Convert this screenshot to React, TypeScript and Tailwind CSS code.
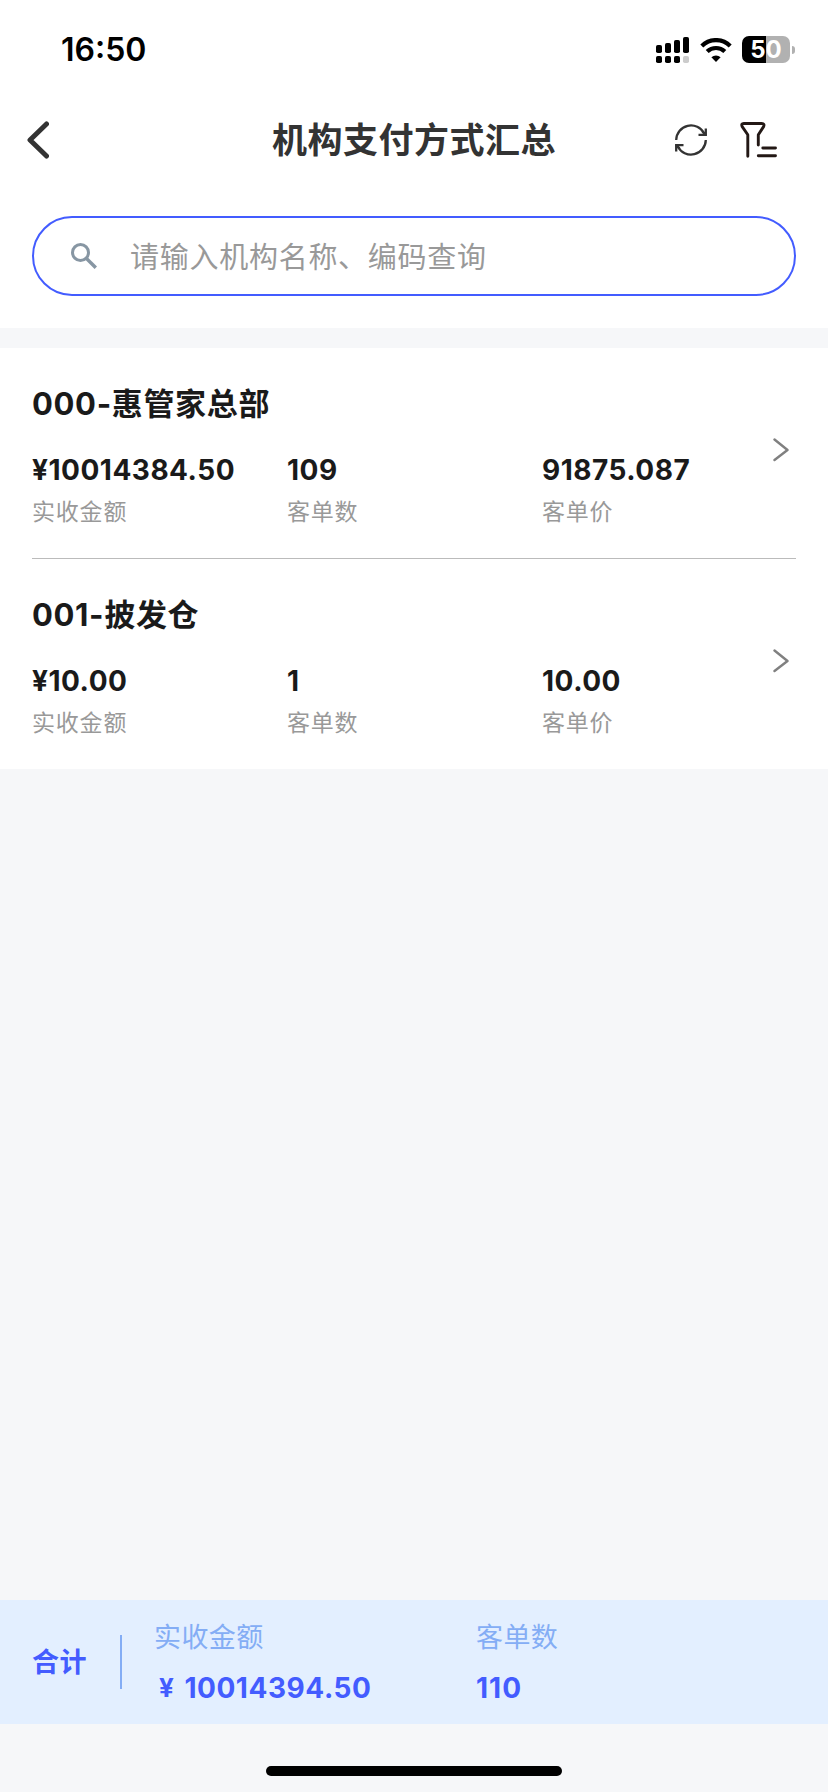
type Branch = {
  name: string
  amount: string
  orders: string
  average: string
}

const branches: Branch[] = [
  { name: "000-惠管家总部", amount: "¥10014384.50", orders: "109", average: "91875.087" },
  { name: "001-披发仓", amount: "¥10.00", orders: "1", average: "10.00" },
]

function SignalIcon() {
  return (
    <svg className="w-[33px] h-[27px]" viewBox="0 0 33 27">
      <rect x="0" y="9" width="6" height="8" rx="1.8" />
      <rect x="9" y="7" width="6" height="10" rx="1.8" />
      <rect x="18" y="4" width="6" height="13" rx="1.8" />
      <rect x="27" y="1" width="6" height="16" rx="1.8" />
      <rect x="0" y="20" width="6" height="7" rx="1.8" />
      <rect x="9" y="20" width="6" height="7" rx="1.8" />
      <rect x="18" y="20" width="6" height="7" rx="1.8" />
      <rect x="27" y="20" width="6" height="7" rx="1.8" fill="#cccccc" />
    </svg>
  )
}

function WifiIcon() {
  return (
    <svg className="w-8 h-6 ml-[11px]" viewBox="0 0 32 24">
      <path d="M1.8 7.9a20.2 20.2 0 0 1 28.4 0" fill="none" stroke="#000" strokeWidth="4.2" />
      <path d="M7.2 13.6a12.6 12.6 0 0 1 17.6 0" fill="none" stroke="#000" strokeWidth="4.2" />
      <path d="M16 24l-4.6-4.7a6.6 6.6 0 0 1 9.2 0z" />
    </svg>
  )
}

function Battery() {
  return (
    <div className="flex items-center ml-[10px]">
      <div className="w-12 h-[27px] rounded-[7px] bg-[linear-gradient(90deg,#000_50%,#b1b1b1_50%)] flex items-center justify-center text-white text-[24px] leading-none font-bold">
        50
      </div>
      <div className="ml-[2px] w-[3px] h-[8px] rounded-r-full bg-[#b1b1b1]" />
    </div>
  )
}

function StatusBar() {
  return (
    <div className="h-[99px] pl-[61px] pr-[33px] flex items-center justify-between">
      <span className="text-[32px] leading-none font-semibold text-black">16:50</span>
      <div className="flex items-center">
        <SignalIcon />
        <WifiIcon />
        <Battery />
      </div>
    </div>
  )
}

function NavBar() {
  return (
    <div className="h-[82px] pl-[27px] pr-[51px] grid grid-cols-[1fr_auto_1fr] items-center">
      <svg className="w-[22px] h-[38px]" viewBox="0 0 22 38" fill="none">
        <path d="M19.5 3L3 19l16.5 16" stroke="#333" strokeWidth="5" strokeLinecap="round" strokeLinejoin="round" />
      </svg>
      <h1 className="pl-6 text-[35px] leading-none font-bold tracking-[0.5px] text-[#333]">机构支付方式汇总</h1>
      <div className="flex items-center justify-end">
        <svg className="w-8 h-8 mr-[33px]" viewBox="0 0 32 32" fill="none" stroke="#333" strokeWidth="2.3">
          <path d="M1.2 16a14.800 14.800 0 0 1 28-6.500" />
          <path d="M30.800 4.500v6.300h-7.300" />
          <path d="M30.800 16a14.800 14.800 0 0 1-28 6.500" />
          <path d="M1.200 27.500v-6.300h7.300" />
          <path d="M31 11l-3.500-3.500M1 21l3.500 3.500" />
        </svg>
        <svg
          className="w-[37px] h-9"
          viewBox="0 0 37 36"
          fill="none"
          stroke="#231815"
          strokeWidth="2.9"
          strokeLinecap="round"
          strokeLinejoin="round"
        >
          <path d="M7.8 34.200V12.800L2.200 4.600Q0.800 1.500 3.800 1.500H21.500Q25 1.500 23.600 4.600L18.300 12.800V23" />
          <path d="M22.800 26h12.700M18.300 33.800h17.200" />
        </svg>
      </div>
    </div>
  )
}

function SearchBar() {
  return (
    <div className="px-8 pt-[35px] pb-8">
      <div className="h-20 rounded-full border-2 border-[#435cff] flex items-center">
        <svg className="w-[26px] h-[26px] ml-[37px]" viewBox="0 0 26 26" fill="none" stroke="#8796a3">
          <circle cx="9.5" cy="9.5" r="8" strokeWidth="3" />
          <path d="M15.5 15.5l9.3 9.3" strokeWidth="3.4" />
        </svg>
        <span className="pt-[2px] ml-[33px] text-[29px] leading-none tracking-[0.73px] text-[#999]">
          请输入机构名称、编码查询
        </span>
      </div>
    </div>
  )
}

function Metric({ value, label }: { value: string; label: string }) {
  return (
    <div>
      <div className="text-[28px] leading-[34px] font-bold tracking-[0.5px] text-[#1a1a1a]">{value}</div>
      <div className="mt-2 text-[23px] leading-[34px] tracking-[0.8px] text-[#999]">{label}</div>
    </div>
  )
}

function BranchRow({ branch }: { branch: Branch }) {
  return (
    <div className="flex items-start pb-5">
      <div className="flex-1 pt-9">
        <h2 className="text-[31px] leading-10 font-bold tracking-[0.65px] text-[#1a1a1a]">{branch.name}</h2>
        <div className="mt-[29px] h-[85px] grid grid-cols-[255px_255px_1fr]">
          <Metric value={branch.amount} label="实收金额" />
          <Metric value={branch.orders} label="客单数" />
          <Metric value={branch.average} label="客单价" />
        </div>
      </div>
      <svg className="w-4 h-6 mt-[90px] mr-[7px]" viewBox="0 0 16 24" fill="none">
        <path d="M1.5 1.5L14.5 12L1.5 22" stroke="#808080" strokeWidth="2.4" strokeLinecap="round" strokeLinejoin="round" />
      </svg>
    </div>
  )
}

function TotalBar() {
  return (
    <div className="h-[124px] bg-[#e3efff] text-[#435cff] flex items-center pl-8">
      <span className="w-[88px] text-[27px] leading-none font-bold tracking-[0.4px]">合计</span>
      <div className="w-[2px] h-[54px] bg-[#84adf5]" />
      <div className="ml-8 pt-px grid grid-cols-[322px_1fr]">
        <div>
          <div className="text-[27px] leading-9 tracking-[0.4px] text-[#84adf5]">实收金额</div>
          <div className="mt-[14px] pl-[5px] flex items-center gap-[10px] text-[28px] leading-9 font-bold tracking-[0.55px]">
            <span className="text-[26px]">¥</span>
            <span>10014394.50</span>
          </div>
        </div>
        <div>
          <div className="text-[27px] leading-9 tracking-[0.4px] text-[#84adf5]">客单数</div>
          <div className="mt-[14px] text-[28px] leading-9 font-bold tracking-[1px]">110</div>
        </div>
      </div>
    </div>
  )
}

export default function App() {
  return (
    <div className="w-[828px] h-[1792px] bg-[#f6f7f9] font-['Inter','Noto_Sans_CJK_SC',sans-serif] flex flex-col overflow-hidden">
      <header className="bg-white h-[328px]">
        <StatusBar />
        <NavBar />
        <SearchBar />
      </header>

      <main className="mt-5 flex-1">
        <div className="bg-white px-8 divide-y divide-[#bbbbbb]">
          {branches.map((branch) => (
            <BranchRow key={branch.name} branch={branch} />
          ))}
        </div>
      </main>

      <TotalBar />

      {/* Home indicator */}
      <div className="h-[68px] pt-[42px]">
        <div className="mx-auto w-[296px] h-[10px] rounded-full bg-black" />
      </div>
    </div>
  )
}
